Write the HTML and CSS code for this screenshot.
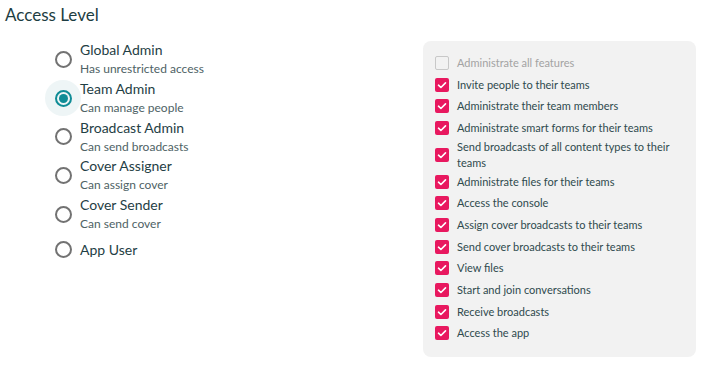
FILE: index.html
```html
<!DOCTYPE html>
<html lang="en">
<head>
  <meta charset="UTF-8">
  <title>Access Level</title>
  <link rel="stylesheet" href="styles.css">
</head>
<body>
  <h2 class="title">Access Level</h2>
  <div class="access">
    <div class="roles">
      <label class="role">
        <span class="radio"><span class="ring"></span></span>
        <span class="role-text"><span class="role-name">Global Admin</span><span class="role-desc">Has unrestricted access</span></span>
      </label>
      <label class="role selected">
        <span class="radio"><span class="ring"></span></span>
        <span class="role-text"><span class="role-name">Team Admin</span><span class="role-desc">Can manage people</span></span>
      </label>
      <label class="role">
        <span class="radio"><span class="ring"></span></span>
        <span class="role-text"><span class="role-name">Broadcast Admin</span><span class="role-desc">Can send broadcasts</span></span>
      </label>
      <label class="role">
        <span class="radio"><span class="ring"></span></span>
        <span class="role-text"><span class="role-name">Cover Assigner</span><span class="role-desc">Can assign cover</span></span>
      </label>
      <label class="role">
        <span class="radio"><span class="ring"></span></span>
        <span class="role-text"><span class="role-name">Cover Sender</span><span class="role-desc">Can send cover</span></span>
      </label>
      <label class="role">
        <span class="radio"><span class="ring"></span></span>
        <span class="role-text"><span class="role-name">App User</span></span>
      </label>
    </div>

    <div class="perms">
      <div class="perm disabled"><span class="box"></span><span>Administrate all features</span></div>
      <div class="perm"><span class="box"><svg viewBox="0 0 14 14"><path d="M3.5 7.2l2.4 2.3 4.6-4.6"/></svg></span><span>Invite people to their teams</span></div>
      <div class="perm"><span class="box"><svg viewBox="0 0 14 14"><path d="M3.5 7.2l2.4 2.3 4.6-4.6"/></svg></span><span>Administrate their team members</span></div>
      <div class="perm"><span class="box"><svg viewBox="0 0 14 14"><path d="M3.5 7.2l2.4 2.3 4.6-4.6"/></svg></span><span>Administrate smart forms for their teams</span></div>
      <div class="perm"><span class="box"><svg viewBox="0 0 14 14"><path d="M3.5 7.2l2.4 2.3 4.6-4.6"/></svg></span><span>Send broadcasts of all content types to their teams</span></div>
      <div class="perm"><span class="box"><svg viewBox="0 0 14 14"><path d="M3.5 7.2l2.4 2.3 4.6-4.6"/></svg></span><span>Administrate files for their teams</span></div>
      <div class="perm"><span class="box"><svg viewBox="0 0 14 14"><path d="M3.5 7.2l2.4 2.3 4.6-4.6"/></svg></span><span>Access the console</span></div>
      <div class="perm"><span class="box"><svg viewBox="0 0 14 14"><path d="M3.5 7.2l2.4 2.3 4.6-4.6"/></svg></span><span>Assign cover broadcasts to their teams</span></div>
      <div class="perm"><span class="box"><svg viewBox="0 0 14 14"><path d="M3.5 7.2l2.4 2.3 4.6-4.6"/></svg></span><span>Send cover broadcasts to their teams</span></div>
      <div class="perm"><span class="box"><svg viewBox="0 0 14 14"><path d="M3.5 7.2l2.4 2.3 4.6-4.6"/></svg></span><span>View files</span></div>
      <div class="perm"><span class="box"><svg viewBox="0 0 14 14"><path d="M3.5 7.2l2.4 2.3 4.6-4.6"/></svg></span><span>Start and join conversations</span></div>
      <div class="perm"><span class="box"><svg viewBox="0 0 14 14"><path d="M3.5 7.2l2.4 2.3 4.6-4.6"/></svg></span><span>Receive broadcasts</span></div>
      <div class="perm"><span class="box"><svg viewBox="0 0 14 14"><path d="M3.5 7.2l2.4 2.3 4.6-4.6"/></svg></span><span>Access the app</span></div>
    </div>
  </div>
</body>
</html>
```

FILE: styles.css
```css
body {
  margin: 0;
  font-family: Lato, "Open Sans", sans-serif;
  color: #27474c;
  background: #ffffff;
}
.title {
  margin: 0;
  padding: 4px 0 0 5px;
  font-size: 17px;
  line-height: 22px;
  font-weight: 400;
  color: #1d3d42;
}
.access {
  display: flex;
  padding-top: 15px;
}
.roles {
  width: 378px;
  padding-left: 45px;
  margin-top: -1px;
}
.role {
  display: flex;
  align-items: center;
  min-height: 32px;
}
.radio {
  width: 36px;
  height: 36px;
  margin: -2px 0;
  flex: none;
  display: flex;
  align-items: center;
  justify-content: center;
  border-radius: 50%;
}
.ring {
  width: 13px;
  height: 13px;
  border: 2px solid #727272;
  border-radius: 50%;
  display: flex;
  align-items: center;
  justify-content: center;
}
.selected .radio { background: #eef5f6; }
.selected .ring { border-color: #0f8c96; }
.selected .ring::after {
  content: "";
  width: 9px;
  height: 9px;
  border-radius: 50%;
  background: #0f8c96;
}
.role-text {
  display: flex;
  flex-direction: column;
  margin-left: -1px;
}
.role-name {
  font-size: 14px;
  line-height: 20px;
  color: #1f4045;
}
.role-desc {
  font-size: 12px;
  line-height: 18.75px;
  color: #4e6265;
}
.perms {
  width: 249px;
  padding: 11px 12px 13px 12px;
  background: #f2f2f2;
  border-radius: 8px;
}
.perm {
  display: flex;
  align-items: center;
  min-height: 21.7px;
  font-size: 11px;
  line-height: 16px;
  color: #2f4a4e;
}
.box {
  width: 14px;
  height: 14px;
  flex: none;
  margin-right: 8px;
  border-radius: 2px;
  background: #e8185f;
}
.box svg {
  display: block;
  width: 14px;
  height: 14px;
  fill: none;
  stroke: #ffffff;
  stroke-width: 1.6;
  stroke-linecap: round;
  stroke-linejoin: round;
}
.disabled { color: #a3a3a3; }
.disabled .box {
  box-sizing: border-box;
  background: transparent;
  border: 1.5px solid #c8c8c8;
}
```
